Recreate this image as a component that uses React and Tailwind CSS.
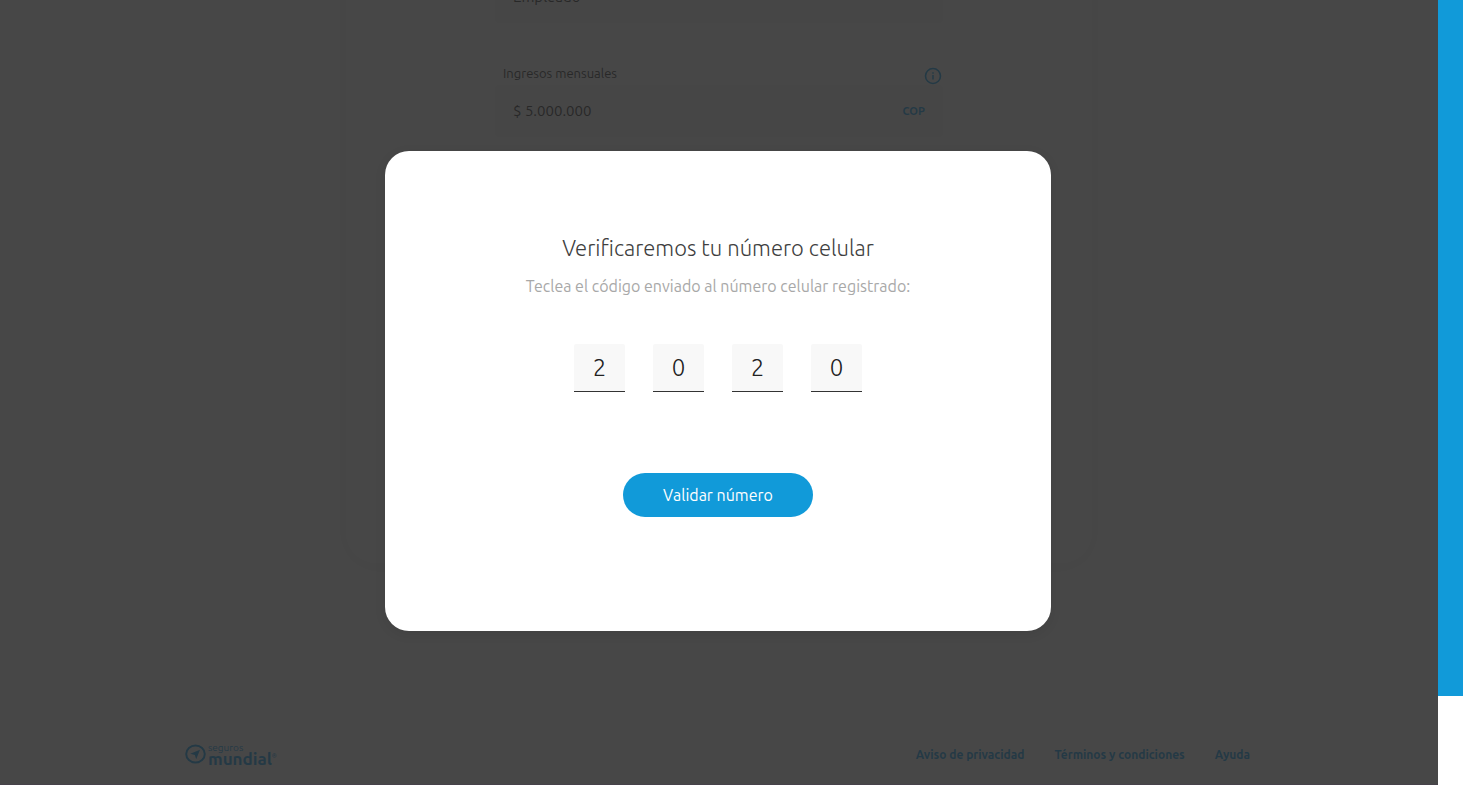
import { useState } from "react";

function InfoIcon() {
  return (
    <svg
      viewBox="0 0 18 18"
      fill="none"
      stroke="currentColor"
      className="size-[18px]"
      aria-hidden="true"
    >
      <circle cx="9" cy="9" r="7.5" strokeWidth="1.6" />
      <path d="M9 8v4.4" strokeWidth="1.5" />
      <path d="M9 5.2v1.5" strokeWidth="1.5" />
    </svg>
  );
}

function Logo() {
  return (
    <div className="flex items-center gap-0.5">
      <svg viewBox="0 0 21 20" className="h-5 w-[21px]" aria-hidden="true">
        <ellipse
          cx="10.5"
          cy="10"
          rx="9.3"
          ry="8.6"
          fill="none"
          stroke="currentColor"
          strokeWidth="2"
        />
        <path d="M15 5.8 5.2 9.7l4.6 1.3 1.4 4.2z" fill="currentColor" />
      </svg>
      <div className="flex flex-col">
        <span className="text-[10px] leading-[9px]">seguros</span>
        <span className="flex text-[17px] leading-[13px] font-bold">
          mundial
          <span className="text-[6px] leading-[8px] font-normal">®</span>
        </span>
      </div>
    </div>
  );
}

function Footer() {
  return (
    <footer className="mx-auto flex w-full max-w-[1068px] items-start justify-between text-[#14a4f0]">
      <Logo />
      <nav className="flex gap-[30px] pr-[3px] text-xs leading-6 font-semibold">
        <a href="#privacidad">Aviso de privacidad</a>
        <a href="#terminos">Términos y condiciones</a>
        <a href="#ayuda">Ayuda</a>
      </nav>
    </footer>
  );
}

function IncomeForm() {
  return (
    <form className="mx-auto flex h-[620px] w-full max-w-[746px] shrink-0 flex-col items-center rounded-[30px] bg-white text-[#333333] shadow-[0_3px_24px_rgba(0,0,0,0.08)]">
      <div className="mt-7 flex w-[448px] flex-col">
        <select
          aria-label="Ocupación"
          className="h-[52px] appearance-none rounded bg-[#f8f8f8] px-[18px] text-[15px]"
          defaultValue="Empleado"
        >
          <option>Empleado</option>
        </select>

        <div className="mt-11 flex items-start justify-between pr-px pl-2">
          <label htmlFor="ingresos" className="text-[13px] leading-3">
            Ingresos mensuales
          </label>
          <span className="text-[#14a4f0]">
            <InfoIcon />
          </span>
        </div>
        <div className="flex h-[52px] items-center rounded bg-[#f8f8f8] px-[18px]">
          <input
            id="ingresos"
            type="text"
            className="min-w-0 flex-1 bg-transparent text-[15px]"
            defaultValue="$ 5.000.000"
          />
          <span className="text-[11px] font-bold text-[#14a4f0]">COP</span>
        </div>
      </div>
    </form>
  );
}

function VerifyDialog() {
  const [code, setCode] = useState(["2", "0", "2", "0"]);

  const handleChange = (index, value) => {
    setCode(code.map((digit, i) => (i === index ? value : digit)));
  };

  return (
    <div className="absolute inset-0 flex items-center justify-center bg-[#272727]/85 pr-0.5 pb-0.5">
      <form
        role="dialog"
        aria-labelledby="verify-title"
        onSubmit={(e) => e.preventDefault()}
        className="flex w-full max-w-[666px] flex-col items-center rounded-3xl bg-white pt-[81px] pb-[114px] shadow-[0_3px_12px_rgba(0,0,0,0.08)]"
      >
        <h1
          id="verify-title"
          className="text-[22px] leading-8 font-light text-[#404040]"
        >
          Verificaremos tu número celular
        </h1>
        <p className="mt-2.5 text-base leading-6 text-[#a8a8a8]">
          Teclea el código enviado al número celular registrado:
        </p>

        {/* One box per digit */}
        <div className="mt-[46px] flex gap-7">
          {code.map((digit, index) => (
            <input
              key={index}
              type="text"
              inputMode="numeric"
              maxLength={1}
              aria-label={`Dígito ${index + 1}`}
              value={digit}
              onChange={(e) => handleChange(index, e.target.value)}
              className="h-12 w-[51px] rounded-t-xs border-b border-[#333333] bg-[#f8f8f8] text-center text-2xl font-light text-[#222222]"
            />
          ))}
        </div>

        <button
          type="submit"
          className="mt-[81px] h-11 w-[190px] rounded-full bg-[#119ad9] text-base text-white"
        >
          Validar número
        </button>
      </form>
    </div>
  );
}

function App() {
  return (
    <div className="flex h-screen bg-white font-['Ubuntu','Noto_Sans',sans-serif] text-[#333333]">
      <div className="relative mb-[18px] flex min-w-0 flex-1 flex-col justify-end overflow-hidden border-b border-[#47424a]">
        <IncomeForm />
        <div className="mt-[180px] pb-[17px]">
          <Footer />
        </div>
        <VerifyDialog />
      </div>
      <aside className="mb-[107px] w-[25px] bg-[#119ad9]" />
    </div>
  );
}

export default App;
